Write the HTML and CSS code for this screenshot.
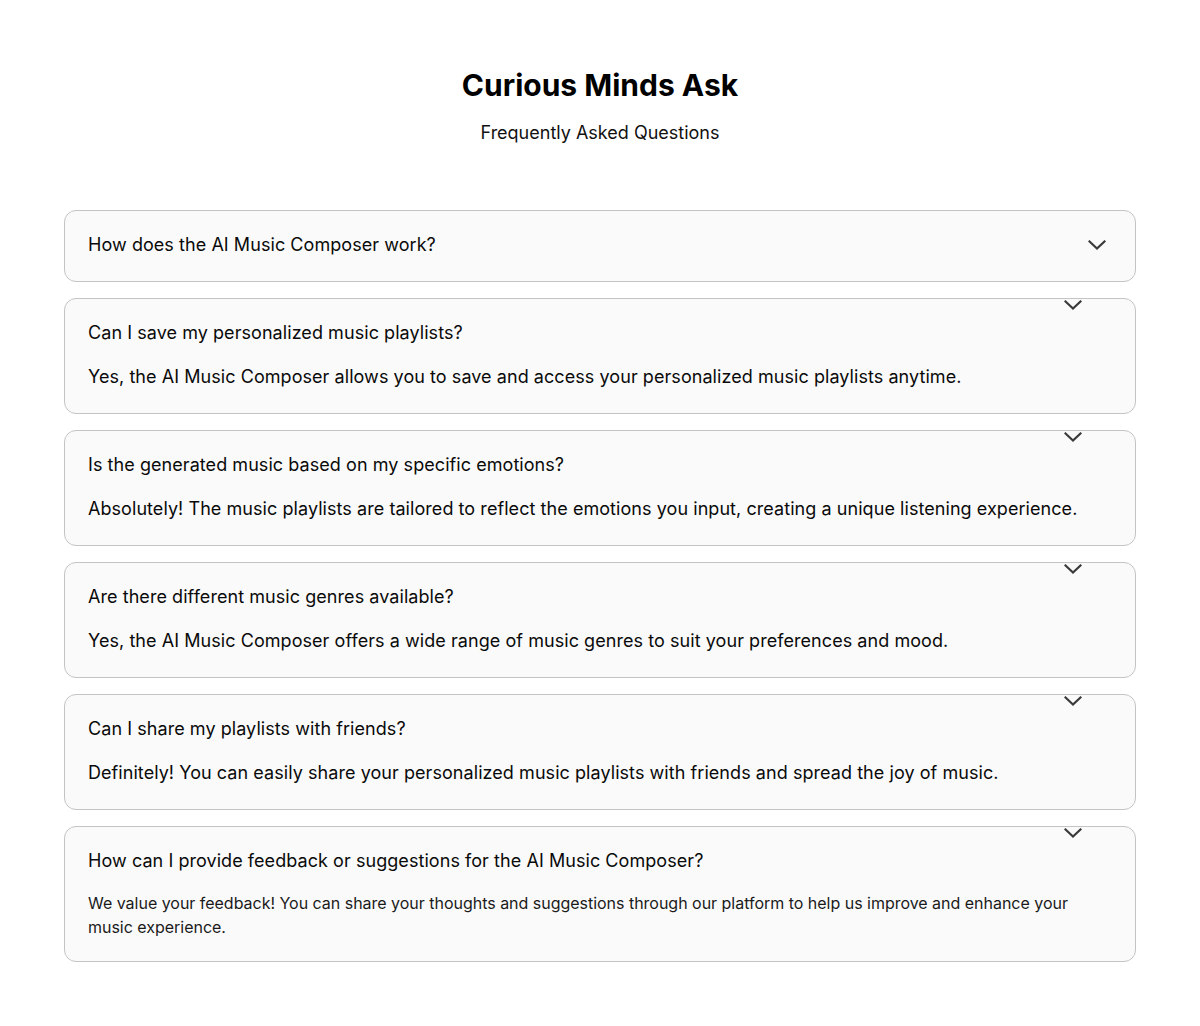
FILE: index.html
```html
<!DOCTYPE html>
<html lang="en">
<head>
<meta charset="utf-8">
<title>Curious Minds Ask</title>
<link rel="stylesheet" href="styles.css">
</head>
<body>
<main class="faq">
  <header class="faq-head">
    <h1 class="faq-title">Curious Minds Ask</h1>
    <p class="faq-sub">Frequently Asked Questions</p>
  </header>
  <div class="faq-list">
    <div class="item item-closed">
      <div class="q">How does the AI Music Composer work?</div>
      <svg class="chev" width="18" height="10" viewBox="0 0 18 10"><polyline points="1.5,1.5 9,8.5 16.5,1.5"/></svg>
    </div>
    <div class="item">
      <svg class="chev chev-float" width="18" height="10" viewBox="0 0 18 10"><polyline points="1.5,1.5 9,8.5 16.5,1.5"/></svg>
      <div class="q">Can I save my personalized music playlists?</div>
      <div class="a">Yes, the AI Music Composer allows you to save and access your personalized music playlists anytime.</div>
    </div>
    <div class="item">
      <svg class="chev chev-float" width="18" height="10" viewBox="0 0 18 10"><polyline points="1.5,1.5 9,8.5 16.5,1.5"/></svg>
      <div class="q">Is the generated music based on my specific emotions?</div>
      <div class="a">Absolutely! The music playlists are tailored to reflect the emotions you input, creating a unique listening experience.</div>
    </div>
    <div class="item">
      <svg class="chev chev-float" width="18" height="10" viewBox="0 0 18 10"><polyline points="1.5,1.5 9,8.5 16.5,1.5"/></svg>
      <div class="q">Are there different music genres available?</div>
      <div class="a">Yes, the AI Music Composer offers a wide range of music genres to suit your preferences and mood.</div>
    </div>
    <div class="item">
      <svg class="chev chev-float" width="18" height="10" viewBox="0 0 18 10"><polyline points="1.5,1.5 9,8.5 16.5,1.5"/></svg>
      <div class="q">Can I share my playlists with friends?</div>
      <div class="a">Definitely! You can easily share your personalized music playlists with friends and spread the joy of music.</div>
    </div>
    <div class="item">
      <svg class="chev chev-float" width="18" height="10" viewBox="0 0 18 10"><polyline points="1.5,1.5 9,8.5 16.5,1.5"/></svg>
      <div class="q">How can I provide feedback or suggestions for the AI Music Composer?</div>
      <div class="a a-small">We value your feedback! You can share your thoughts and suggestions through our platform to help us improve and enhance your music experience.</div>
    </div>
  </div>
</main>
</body>
</html>
```

FILE: styles.css
```css
* { box-sizing: border-box; }
html, body { margin: 0; padding: 0; background: #ffffff; }
body {
  font-family: Inter, "Noto Sans", sans-serif;
  color: #0a0a0a;
}
.faq {
  padding: 67px 64px 64px;
}
.faq-head {
  text-align: center;
  margin-bottom: 63px;
}
.faq-title {
  margin: 0;
  font-size: 30px;
  line-height: 36px;
  font-weight: 700;
  color: #000000;
}
.faq-sub {
  margin: 16px 0 0;
  font-size: 18px;
  line-height: 28px;
  color: #111111;
}
.faq-list {
  display: flex;
  flex-direction: column;
  gap: 16px;
}
.item {
  position: relative;
  display: flex;
  flex-direction: column;
  gap: 16px;
  padding: 20px 23px 22px;
  border: 1px solid #c4c4c4;
  border-radius: 12px;
  background: #fafafa;
}
.item-closed {
  flex-direction: row;
  align-items: center;
  justify-content: space-between;
}
.q {
  font-size: 18px;
  line-height: 28px;
  font-weight: 400;
  letter-spacing: 0.06px;
  color: #0a0a0a;
}
.a {
  font-size: 18px;
  line-height: 28px;
  letter-spacing: 0.06px;
  color: #0a0a0a;
}
.a-small {
  font-size: 16px;
  line-height: 24px;
  letter-spacing: -0.02px;
  color: #1a1a1a;
}
.chev {
  display: block;
  flex: none;
  margin-right: 6px;
}
.chev polyline {
  fill: none;
  stroke: #3a3a3a;
  stroke-width: 2.2;
  stroke-linecap: square;
  stroke-linejoin: miter;
}
.chev-float {
  position: absolute;
  top: 1px;
  right: 53px;
  margin: 0;
}
```
